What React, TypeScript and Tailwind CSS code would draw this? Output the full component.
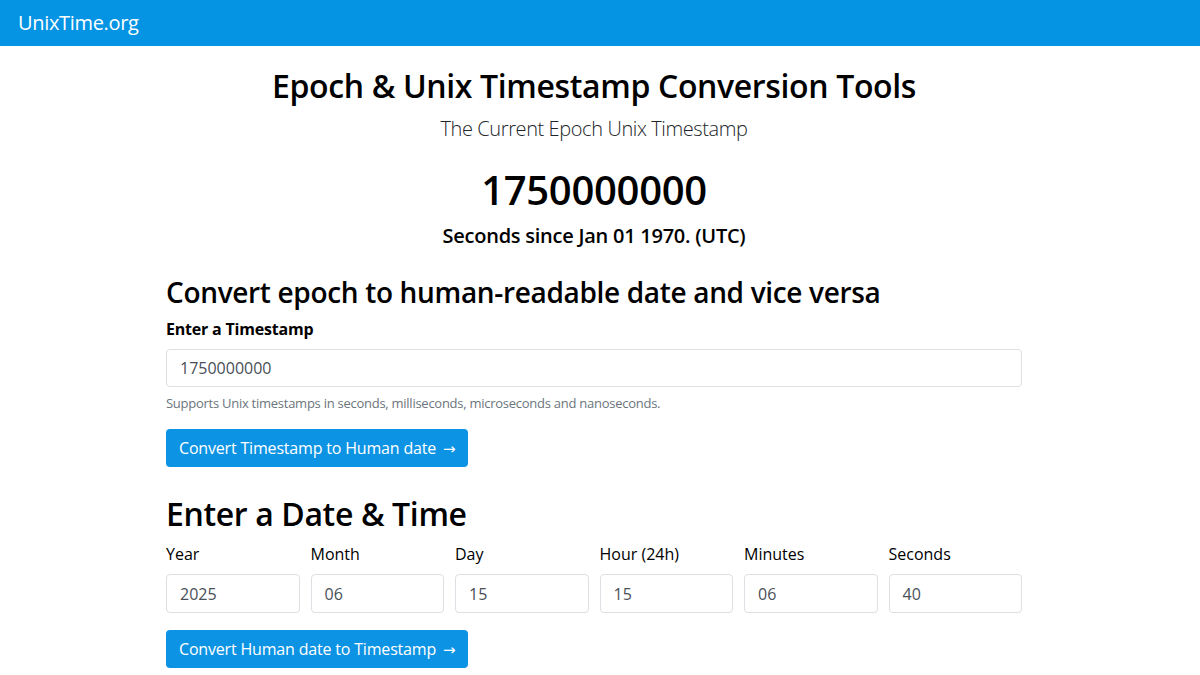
import React from "react";

const font = { fontFamily: '"Open Sans", "Noto Sans", sans-serif' };

function Arrow() {
  return (
    <span className="ml-[3px] text-[15px]" style={{ fontFamily: '"DejaVu Sans", sans-serif' }}>
      →
    </span>
  );
}

function Field({ label, value }: { label: string; value: string }) {
  return (
    <div className="flex flex-col">
      <div className="text-[16px] leading-[24px] text-black">{label}</div>
      <div className="mt-[8px] h-[39px] rounded-[4px] border border-[#dcdfe3] bg-white flex items-center px-[13px] text-[16px] text-[#495057]">
        {value}
      </div>
    </div>
  );
}

export default function App() {
  return (
    <div className="min-h-[675px] bg-white" style={font}>
      <div className="h-[46px] bg-[#0494e3] flex items-center pl-[18px]">
        <span className="text-white text-[20px] leading-[28px] tracking-[-0.33px]">UnixTime.org</span>
      </div>
      <div className="ml-[166px] w-[856px]">
        <h1 className="mt-[20px] text-center text-[32px] leading-[40px] font-semibold text-black tracking-[-0.36px]">
          Epoch &amp; Unix Timestamp Conversion Tools
        </h1>
        <p className="mt-[9px] text-center text-[20px] leading-[28px] font-light text-[#212529] tracking-[-0.4px]">
          The Current Epoch Unix Timestamp
        </p>
        <div className="mt-[23px] text-center text-[40px] leading-[48px] font-semibold text-black tracking-[-0.3px]">
          1750000000
        </div>
        <div className="mt-[8px] text-center text-[20px] leading-[28px] font-semibold text-black tracking-[-0.25px]">
          Seconds since Jan 01 1970. (UTC)
        </div>
        <h2 className="mt-[24px] text-[28px] leading-[36px] font-semibold text-black tracking-[-0.33px]">
          Convert epoch to human-readable date and vice versa
        </h2>
        <div className="mt-[7px] text-[16px] leading-[24px] font-bold text-black tracking-[-0.2px]">Enter a Timestamp</div>
        <div className="mt-[8px] h-[38px] rounded-[4px] border border-[#dcdfe3] flex items-center px-[13px] text-[16px] text-[#495057]">
          1750000000
        </div>
        <div className="mt-[7px] text-[13px] leading-[18px] text-[#6c757d] tracking-[-0.26px]">
          Supports Unix timestamps in seconds, milliseconds, microseconds and nanoseconds.
        </div>
        <button className="mt-[17px] h-[38px] rounded-[4px] bg-[#0d93e3] px-[13px] text-[16px] text-white tracking-[-0.18px]">
          Convert Timestamp to Human date <Arrow />
        </button>
        <h2 className="mt-[27px] text-[32px] leading-[40px] font-semibold text-black tracking-[-0.37px]">Enter a Date &amp; Time</h2>
        <div className="mt-[8px] grid grid-cols-6 gap-x-[11px]">
          <Field label="Year" value="2025" />
          <Field label="Month" value="06" />
          <Field label="Day" value="15" />
          <Field label="Hour (24h)" value="15" />
          <Field label="Minutes" value="06" />
          <Field label="Seconds" value="40" />
        </div>
        <button className="mt-[17px] h-[38px] rounded-[4px] bg-[#0d93e3] px-[13px] text-[16px] text-white tracking-[-0.18px]">
          Convert Human date to Timestamp <Arrow />
        </button>
      </div>
    </div>
  );
}
